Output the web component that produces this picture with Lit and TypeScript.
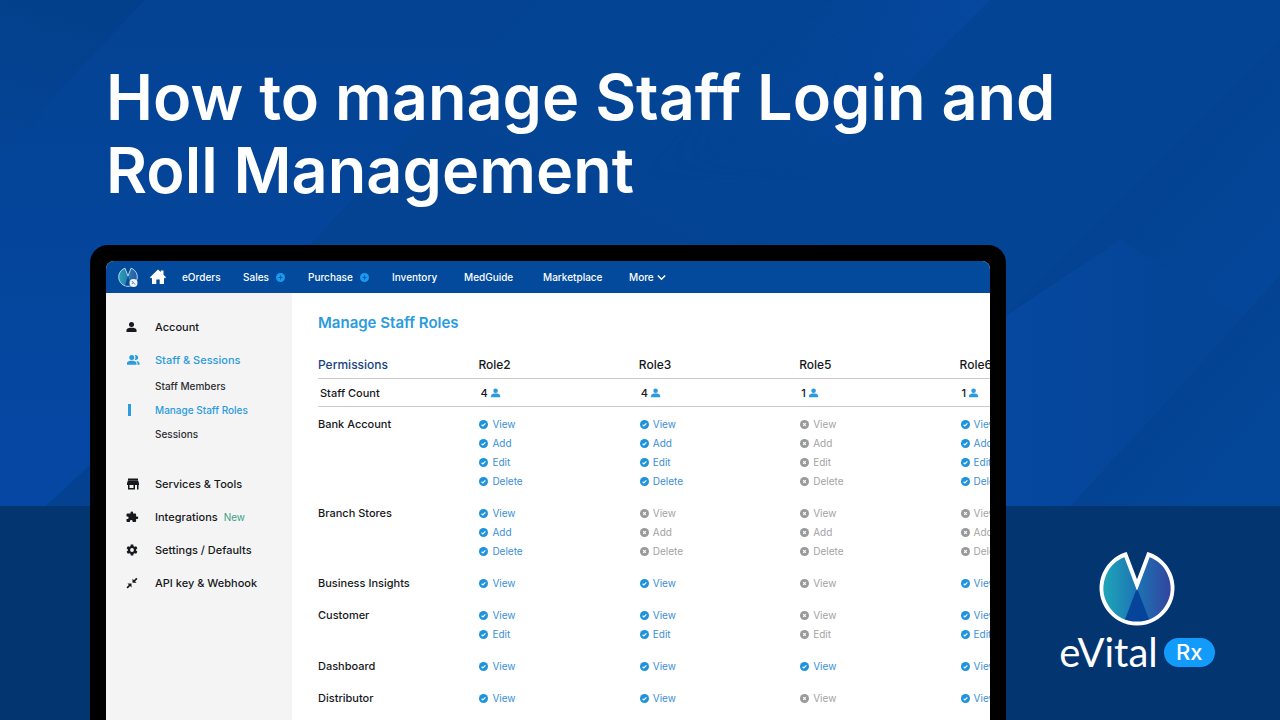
import { LitElement, html, css, svg } from "lit";
import { customElement } from "lit/decorators.js";
import { classMap } from "lit/directives/class-map.js";

type Grant = [label: string, roles: string];

const ROLES = [
  { name: "Role2", staff: 4 },
  { name: "Role3", staff: 4 },
  { name: "Role5", staff: 1 },
  { name: "Role6", staff: 1 },
];

// One flag per role: 1 = granted, 0 = denied.
const PERMISSIONS: { name: string; grants: Grant[] }[] = [
  { name: "Bank Account", grants: [["View", "1101"], ["Add", "1101"], ["Edit", "1101"], ["Delete", "1101"]] },
  { name: "Branch Stores", grants: [["View", "1000"], ["Add", "1000"], ["Delete", "1000"]] },
  { name: "Business Insights", grants: [["View", "1101"]] },
  { name: "Customer", grants: [["View", "1101"], ["Edit", "1101"]] },
  { name: "Dashboard", grants: [["View", "1111"]] },
  { name: "Distributor", grants: [["View", "1101"]] },
];

const PERSON = svg`<circle cx="11" cy="6.500" r="5.500"/><path d="M0 22v-3.500c0-4 6-5.500 11-5.500s11 1.500 11 5.500V22z"/>`;

const ICONS = {
  account: svg`<circle cx="9" cy="7" r="5"/><path d="M-1 22v-3.500c0-3.600 6-4.800 10-4.800s10 1.200 10 4.800V22z"/>`,
  staff: svg`<circle cx="9.500" cy="7" r="5"/><path d="M15.500 2.400a5 5 0 1 1 0 9.200c2-2.600 2-6.600 0-9.200zM0 21.500v-3c0-3.600 6-4.800 9.500-4.800s9.500 1.200 9.500 4.800v3zM21 21.500v-3c0-1.800-.8-3.300-2.200-4.500 3.200.4 6.200 1.700 6.200 4.500v3z"/>`,
  store: svg`<path d="M2 1h20v4H2zM1.500 5.500h21L24 11v3h-1v9h-3v-9h-4v9H2v-9H0v-3zM5 14v6h8v-6z" fill-rule="evenodd"/>`,
  puzzle: svg`<path d="M20 11h-1.800V7a2 2 0 0 0-2-2h-4V3.500a2.600 2.600 0 0 0-5.200 0V5H1a2 2 0 0 0-2 2v3.800H.5a2.700 2.700 0 0 1 0 5.400H-1V20a2 2 0 0 0 2 2h4.800v-1.500a2.700 2.700 0 0 1 5.400 0V22h5a2 2 0 0 0 2-2v-4H20a2.500 2.500 0 0 0 0-5z"/>`,
  gear: svg`<path fill-rule="evenodd" d="M7.500 1h5l.6 3.300 2 1.200 3.200-1.200 2.500 4.400-2.600 2.100v2.400l2.600 2.100-2.500 4.400-3.200-1.200-2 1.200-.6 3.300h-5l-.6-3.300-2-1.200-3.200 1.200-2.500-4.400 2.600-2.100v-2.400L-.8 8.700l2.500-4.400 3.200 1.200 2-1.200zM10 8.200a3.800 3.800 0 1 0 0 7.600 3.800 3.800 0 0 0 0-7.600z"/>`,
  api: svg`<path d="M11 11.500v-8l2.800 2.800L18.500 1.500 21 4l-4.800 4.700 2.800 2.800zM9 13v8l-2.800-2.800L1.500 23-1 20.500l4.800-4.700L1 13z"/>`,
};

const SIDE_ITEMS: { label: string; icon: keyof typeof ICONS; active?: boolean; tag?: string; children?: string[] }[] = [
  { label: "Account", icon: "account" },
  { label: "Staff & Sessions", icon: "staff", active: true, children: ["Staff Members", "Manage Staff Roles", "Sessions"] },
  { label: "Services & Tools", icon: "store" },
  { label: "Integrations", icon: "puzzle", tag: "New" },
  { label: "Settings / Defaults", icon: "gear" },
  { label: "API key & Webhook", icon: "api" },
];

const NAV = [
  { label: "eOrders" },
  { label: "Sales", add: true },
  { label: "Purchase", add: true },
  { label: "Inventory" },
  { label: "MedGuide" },
  { label: "Marketplace" },
];

@customElement("staff-console")
class StaffConsole extends LitElement {
  static styles = css`
    :host { display: flex; flex-direction: column; min-width: 0; background: #fff; color: #16181c; font-size: 11px; font-weight: 500; overflow: hidden; border-radius: 8px 8px 0 0; }
    a { color: inherit; text-decoration: none; }
    button { font: inherit; color: inherit; background: none; border: 0; padding: 0; display: flex; align-items: center; }
    .nav { display: flex; align-items: center; height: 32px; flex: none; padding-left: 11px; background: #034a9c; color: #fff; font-size: 10px; white-space: nowrap; }
    .mark { width: 22px; height: 22px; display: block; }
    .home { width: 16px; height: 16px; margin-left: 11px; display: block; }
    .links { display: grid; grid-template-columns: 61px 65px 84px 72px 79px 86px auto; margin-left: 16px; }
    .entry { display: flex; align-items: center; gap: 7px; }
    .plus { width: 9px; height: 9px; display: block; }
    .chevron { width: 9px; height: 9px; margin-left: 3px; }
    .body { display: grid; grid-template-columns: 186px minmax(0, 1fr); flex: 1; min-height: 0; }
    .side { background: #f4f4f4; padding-top: 20px; }
    ul { list-style: none; margin: 0; padding: 0; }
    .menu { display: flex; flex-direction: column; gap: 5px; }
    .item { display: flex; align-items: center; height: 28px; padding-left: 21px; white-space: nowrap; }
    .icon { width: 12px; height: 12px; margin-right: 16px; fill: currentColor; overflow: visible; }
    .active { color: #2b9be0; }
    .tag { margin-left: 6px; font-size: 10px; font-weight: 400; color: #3f9e85; }
    .sub { padding-bottom: 19px; font-size: 10px; color: #2c2e33; }
    .child { display: flex; align-items: center; height: 24px; padding-left: 49px; }
    .current { color: #2b9be0; padding-left: 22px; }
    .current::before { content: ""; width: 3px; height: 12px; margin-right: 24px; background: #2b9be0; }
    .main { padding: 20px 0 0 26px; min-width: 0; overflow: hidden; }
    h2 { margin: 0; font-size: 15px; line-height: 20px; font-weight: 600; color: #2b9be0; }
    table { width: 802px; margin-top: 18px; table-layout: fixed; border-collapse: collapse; }
    th, td { text-align: left; vertical-align: top; padding: 0; font-weight: 500; }
    .heads th { height: 27px; vertical-align: middle; font-size: 12px; border-bottom: 1px solid #c9c9c9; }
    .heads .lead { color: #17437f; }
    .count th, .count td { height: 27px; vertical-align: middle; padding-left: 2px; border-bottom: 1px solid #c9c9c9; }
    .staff { display: flex; align-items: center; gap: 3px; }
    .person { width: 10px; height: 10px; fill: #2b9be0; }
    .gap td { height: 8px; }
    .rule th, .rule td { line-height: 19px; padding-bottom: 13px; }
    .grant { display: flex; align-items: center; gap: 4px; height: 19px; padding-left: 1px; font-size: 10px; font-weight: 400; color: #a3a3a3; }
    .granted { color: #3a8fd6; }
    .grant input { appearance: none; width: 9px; height: 9px; margin: 0; border-radius: 50%; background: #9a9a9a url("data:image/svg+xml,%3Csvg xmlns='http://www.w3.org/2000/svg' viewBox='0 0 9 9'%3E%3Cpath d='M3.200 3.200l2.600 2.600M5.800 3.200L3.200 5.800' stroke='white' stroke-width='1.200'/%3E%3C/svg%3E"); }
    .grant input:checked { background: #1c93dc url("data:image/svg+xml,%3Csvg xmlns='http://www.w3.org/2000/svg' viewBox='0 0 9 9'%3E%3Cpath d='M2.600 4.700l1.300 1.200 2.500-2.500' fill='none' stroke='white' stroke-width='1.200'/%3E%3C/svg%3E"); }
  `;

  render() {
    return html`
      <nav class="nav">
        <svg class="mark" viewBox="0 0 22 22">
          <defs><linearGradient id="m"><stop offset="0" stop-color="#27a3b5"/><stop offset="1" stop-color="#2a55a5"/></linearGradient></defs>
          <path d="M8 2.200A9.300 9.300 0 1 0 14 2.200L11 10z" fill="url(#m)" stroke="#b9d6ec" stroke-linejoin="round"/>
          <path d="M11 10l3 9.500H8z" fill="#0a4a98"/>
          <circle cx="16.500" cy="17" r="4" fill="#f1f6fb"/>
          <path d="M14.800 15l3.400 3.600M14.800 18l2-2" stroke="#5a88bd"/>
        </svg>
        <a class="home" href="#home" aria-label="Home">
          <svg viewBox="0 0 16 16" fill="#fff"><path d="M8 .5l2.800 2.600V1.500h2.700v4.200L16 8.200l-1.100 1.200-.9-.8V15H9.700v-4.500H6.300V15H2V8.600l-.9.800L0 8.200z"/></svg>
        </a>
        <div class="links">
          ${NAV.map((n) => html`<span class="entry"><a href="#${n.label}">${n.label}</a>${n.add
            ? html`<button aria-label="Add ${n.label}"><svg class="plus" viewBox="0 0 9 9"><circle cx="4.500" cy="4.500" r="4.500" fill="#189af0"/><path d="M4.500 2.500v4M2.500 4.500h4" stroke="#0a59a8"/></svg></button>`
            : ""}</span>`)}
          <button>More<svg class="chevron" viewBox="0 0 9 9" fill="none" stroke="#fff" stroke-width="1.500"><path d="M.8 2.500l3.700 3.700 3.700-3.700"/></svg></button>
        </div>
      </nav>
      <div class="body">
        <aside class="side">
          <ul class="menu">
            ${SIDE_ITEMS.map((s) => html`<li>
              <a class=${classMap({ item: true, active: !!s.active })} href="#${s.icon}">
                <svg class="icon" viewBox="0 0 24 24">${ICONS[s.icon]}</svg>${s.label}${s.tag ? html`<span class="tag">${s.tag}</span>` : ""}
              </a>
              ${s.children ? html`<ul class="sub">${s.children.map((c) => html`<li><a class=${classMap({ child: true, current: c === "Manage Staff Roles" })} href="#${c}">${c}</a></li>`)}</ul>` : ""}
            </li>`)}
          </ul>
        </aside>
        <section class="main">
          <h2>Manage Staff Roles</h2>
          <table>
            <thead>
              <tr class="heads"><th class="lead">Permissions</th>${ROLES.map((r) => html`<th>${r.name}</th>`)}</tr>
            </thead>
            <tbody>
              <tr class="count"><th>Staff Count</th>${ROLES.map((r) => html`<td><span class="staff">${r.staff}<svg class="person" viewBox="0 0 24 24">${PERSON}</svg></span></td>`)}</tr>
              <tr class="gap"><td colspan="5"></td></tr>
              ${PERMISSIONS.map((p) => html`<tr class="rule"><th>${p.name}</th>${ROLES.map((_, i) => html`<td>${p.grants.map(([label, flags]) => {
                const on = flags[i] === "1";
                return html`<label class=${classMap({ grant: true, granted: on })}><input type="checkbox" .checked=${on}>${label}</label>`;
              })}</td>`)}</tr>`)}
            </tbody>
          </table>
        </section>
      </div>
    `;
  }
}

@customElement("app-root")
class AppRoot extends LitElement {
  static styles = css`
    :host { display: grid; grid-template-rows: auto minmax(0, 1fr); position: relative; height: 100vh; overflow: hidden; background: #044597; font-family: Inter, sans-serif; color: #fff; }
    .backdrop { position: absolute; inset: 0; width: 100%; height: 100%; }
    h1 { position: relative; margin: 0; padding: 61px 106px 38px; font-size: 63px; line-height: 73px; font-weight: 600; }
    .stage { position: relative; display: grid; grid-template-columns: minmax(0, 1fr) 274px; padding-left: 90px; min-height: 0; }
    .screen { display: flex; border: 16px solid #000; border-bottom: 0; border-radius: 18px 18px 0 0; background: #000; min-height: 0; }
    .screen staff-console { flex: 1; }
    .brand { align-self: end; display: flex; flex-direction: column; align-items: center; padding: 0 12px 48px 0; }
    .emblem { width: 78px; height: 78px; display: block; }
    .name { display: flex; align-items: center; gap: 6px; margin-top: 4px; font-family: Lato, sans-serif; font-size: 40px; line-height: 40px; }
    .rx { width: 51px; height: 29px; border-radius: 15px; background: #129bfa; font-family: Inter, sans-serif; font-size: 22px; line-height: 29px; font-weight: 500; text-align: center; }
  `;

  render() {
    return html`
      <svg class="backdrop" viewBox="0 0 1280 720" preserveAspectRatio="none" aria-hidden="true">
        <defs>
          <linearGradient id="base" x1="0" y1="0" x2="0" y2="1"><stop offset="0" stop-color="#044393"/><stop offset=".65" stop-color="#0547a3"/></linearGradient>
          <linearGradient id="corner" gradientUnits="userSpaceOnUse" x1="100" y1="0" x2="40" y2="170"><stop offset="0" stop-color="#03408b"/><stop offset="1" stop-color="#03408b" stop-opacity="0"/></linearGradient>
          <linearGradient id="middle" gradientUnits="userSpaceOnUse" x1="380" y1="245" x2="480" y2="50"><stop offset="0" stop-color="#044392"/><stop offset="1" stop-color="#044494"/></linearGradient>
          <linearGradient id="ridge" gradientUnits="userSpaceOnUse" x1="925" y1="65" x2="835" y2="-25"><stop offset="0" stop-color="#0648a0"/><stop offset="1" stop-color="#0648a0" stop-opacity="0"/></linearGradient>
          <linearGradient id="fade" x1="0" y1="0" x2="0" y2="1"><stop offset="0" stop-color="#fff"/><stop offset="1" stop-color="#000"/></linearGradient>
          <mask id="falloff"><path d="M600 0h400v180H600z" fill="url(#fade)"/></mask>
          <linearGradient id="right" gradientUnits="userSpaceOnUse" x1="1150" y1="180" x2="1250" y2="270"><stop offset="0" stop-color="#044393"/><stop offset="1" stop-color="#044699"/></linearGradient>
          <linearGradient id="low" gradientUnits="userSpaceOnUse" x1="1210" y1="350" x2="1280" y2="410"><stop offset="0" stop-color="#044393"/><stop offset="1" stop-color="#044698"/></linearGradient>
          <linearGradient id="glow" gradientUnits="userSpaceOnUse" x1="1000" y1="0" x2="1180" y2="0"><stop offset="0" stop-color="#0648a0"/><stop offset="1" stop-color="#044597"/></linearGradient>
        </defs>
        <path d="M0 0h1280v720H0z" fill="url(#base)"/>
        <path d="M0 0h145L60 90 0 170z" fill="url(#corner)"/>
        <path d="M310 245L420 125 540 0h740v720H310z" fill="url(#middle)"/>
        <path d="M600 0h390L810 180H600z" fill="url(#ridge)" mask="url(#falloff)"/>
        <path d="M1000 320l120-120 160-160v466h-280z" fill="url(#right)"/>
        <path d="M1000 320l120-80 160 100v166h-280z" fill="url(#glow)"/>
        <path d="M1280 275L1150 420l-80 86h210z" fill="url(#low)"/>
        <path d="M90 465L46 506h60z" fill="#044190"/>
        <path d="M0 506h1280v214H0z" fill="#033570"/>
      </svg>
      <h1>How to manage Staff Login and<br>Roll Management</h1>
      <div class="stage">
        <div class="screen"><staff-console></staff-console></div>
        <div class="brand">
          <svg class="emblem" viewBox="0 0 78 78" aria-hidden="true">
            <defs><linearGradient id="disc"><stop offset=".05" stop-color="#1fa3b8"/><stop offset=".5" stop-color="#1c74b4"/><stop offset=".95" stop-color="#3247a0"/></linearGradient></defs>
            <path d="M27.500 5A35.500 35.500 0 1 0 50.500 5L39 35z" fill="url(#disc)"/>
            <path d="M39 38l13 34q-13 5-26 0z" fill="#05449a"/>
            <path d="M27.500 4.500A35.500 35.500 0 1 0 50.500 4.500L39 35z" fill="none" stroke="#fff" stroke-width="4"/>
          </svg>
          <div class="name">eVital<span class="rx">Rx</span></div>
        </div>
      </div>
    `;
  }
}
